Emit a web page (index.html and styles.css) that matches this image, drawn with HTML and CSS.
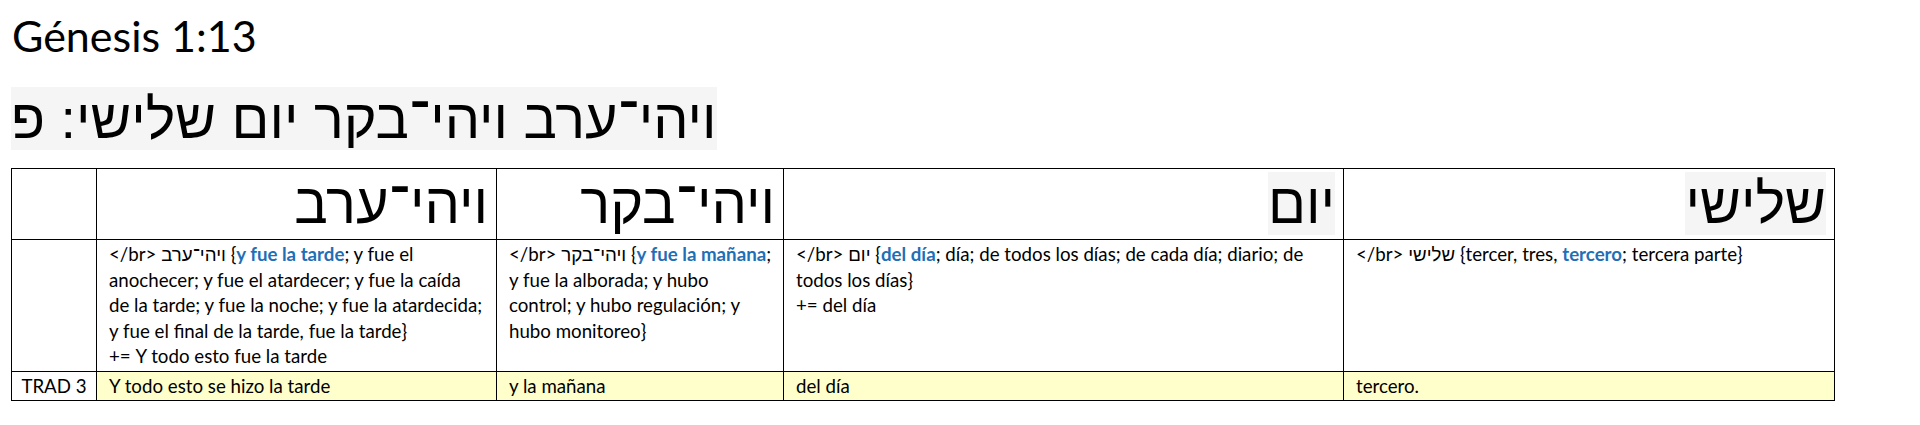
FILE: index.html
```html
<!DOCTYPE html>
<html lang="es">
<head>
<meta charset="utf-8">
<title>Génesis 1:13</title>
<link rel="stylesheet" href="styles.css">
</head>
<body>
<h1 class="ref">Génesis 1:13</h1>
<p class="verse"><span class="hl" lang="he">ויהי־ערב ויהי־בקר יום שלישי: פ</span></p>
<table class="grid">
  <colgroup>
    <col class="c0"><col class="c1"><col class="c2"><col class="c3"><col class="c4">
  </colgroup>
  <tr class="head">
    <td></td>
    <td><span lang="he">ויהי־ערב</span></td>
    <td><span lang="he">ויהי־בקר</span></td>
    <td><span class="hl" lang="he">יום</span></td>
    <td><span class="hl" lang="he">שלישי</span></td>
  </tr>
  <tr class="gloss">
    <td></td>
    <td>&lt;/br&gt; ויהי־ערב {<b class="kw">y fue la tarde</b>; y fue el anochecer; y fue el atardecer; y fue la caída de la tarde; y fue la noche; y fue la atardecida; y fue el final de la tarde, fue la tarde}<br>+= Y todo esto fue la tarde</td>
    <td class="tight">&lt;/br&gt; ויהי־בקר {<b class="kw">y fue la mañana</b>;<br>y fue la alborada; y hubo<br>control; y hubo regulación; y<br>hubo monitoreo}</td>
    <td>&lt;/br&gt; יום {<b class="kw">del día</b>; día; de todos los días; de cada día; diario; de todos los días}<br>+= del día</td>
    <td>&lt;/br&gt; שלישי {tercer, tres, <b class="kw">tercero</b>; tercera parte}</td>
  </tr>
  <tr class="trad">
    <td class="label">TRAD 3</td>
    <td>Y todo esto se hizo la tarde</td>
    <td>y la mañana</td>
    <td>del día</td>
    <td>tercero.</td>
  </tr>
</table>
</body>
</html>
```
FILE: styles.css
```css
html, body {
  margin: 0;
  background: #ffffff;
}

body {
  padding: 0 11px;
  font-family: Lato, "Liberation Sans", sans-serif;
  color: #000000;
}

.ref {
  margin: 11px 0 0;
  padding-left: 1px;
  font-size: 43px;
  font-weight: normal;
  line-height: 50px;
}

.verse {
  margin: 24px 0 0;
  font-family: "Liberation Sans", sans-serif;
  font-size: 55.8px;
  line-height: 67px;
}

.hl {
  background: #f5f5f5;
}

.grid {
  margin-top: 16px;
  border-collapse: collapse;
  table-layout: fixed;
  width: 1823px;
}

.c0 { width: 85px; }
.c1 { width: 400px; }
.c2 { width: 287px; }
.c3 { width: 560px; }
.c4 { width: 491px; }

.grid td {
  border: 1px solid #000000;
  padding: 2px 12px 1px;
  vertical-align: top;
  font-size: 18.7px;
  line-height: 25.5px;
}

.grid td.tight {
  padding-right: 2px;
  white-space: nowrap;
}

.head td {
  padding: 2px 8px 3px;
  text-align: right;
  vertical-align: bottom;
  font-family: "Liberation Sans", sans-serif;
  font-size: 56px;
  line-height: normal;
}

.kw {
  color: #1f6fb6;
  font-weight: bold;
}

.trad td {
  background: #ffffcc;
}

.trad td.label {
  background: #ffffff;
  text-align: center;
  padding-left: 4px;
  padding-right: 4px;
}
```
